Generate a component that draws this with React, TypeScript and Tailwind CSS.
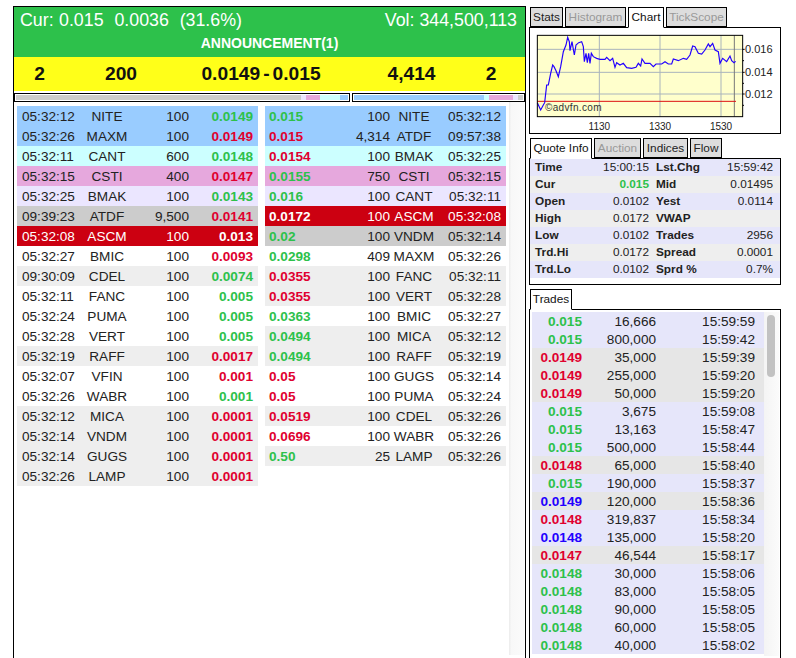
import React from 'react';

const ROW: Record<string, string> = {
  blue: 'bg-[#99ccff]',
  cyan: 'bg-[#ccffff]',
  pink: 'bg-[#e6a8dd]',
  lav: 'bg-[#ebe6ff]',
  grey: 'bg-[#cccccc]',
  red: 'bg-[#cc0011] text-white',
  white: 'bg-white',
  alt: 'bg-[#eeeeee]',
};

const PRICE: Record<string, string> = {
  g: 'text-[#2dc14b]',
  r: 'text-[#e0002f]',
  b: 'text-[#2200ff]',
  w: 'text-white',
};

const bids = [
  ['05:32:12', 'NITE', '100', '0.0149', 'g', 'blue'],
  ['05:32:26', 'MAXM', '100', '0.0149', 'r', 'blue'],
  ['05:32:11', 'CANT', '600', '0.0148', 'g', 'cyan'],
  ['05:32:15', 'CSTI', '400', '0.0147', 'r', 'pink'],
  ['05:32:25', 'BMAK', '100', '0.0143', 'g', 'lav'],
  ['09:39:23', 'ATDF', '9,500', '0.0141', 'r', 'grey'],
  ['05:32:08', 'ASCM', '100', '0.013', 'w', 'red'],
  ['05:32:27', 'BMIC', '100', '0.0093', 'r', 'white'],
  ['09:30:09', 'CDEL', '100', '0.0074', 'g', 'alt'],
  ['05:32:11', 'FANC', '100', '0.005', 'g', 'white'],
  ['05:32:24', 'PUMA', '100', '0.005', 'g', 'white'],
  ['05:32:28', 'VERT', '100', '0.005', 'g', 'white'],
  ['05:32:19', 'RAFF', '100', '0.0017', 'r', 'alt'],
  ['05:32:07', 'VFIN', '100', '0.001', 'r', 'white'],
  ['05:32:26', 'WABR', '100', '0.001', 'g', 'white'],
  ['05:32:12', 'MICA', '100', '0.0001', 'r', 'alt'],
  ['05:32:14', 'VNDM', '100', '0.0001', 'r', 'alt'],
  ['05:32:14', 'GUGS', '100', '0.0001', 'r', 'alt'],
  ['05:32:26', 'LAMP', '100', '0.0001', 'r', 'alt'],
];

const asks = [
  ['0.015', '100', 'NITE', '05:32:12', 'g', 'blue'],
  ['0.015', '4,314', 'ATDF', '09:57:38', 'r', 'blue'],
  ['0.0154', '100', 'BMAK', '05:32:25', 'r', 'cyan'],
  ['0.0155', '750', 'CSTI', '05:32:15', 'g', 'pink'],
  ['0.016', '100', 'CANT', '05:32:11', 'g', 'lav'],
  ['0.0172', '100', 'ASCM', '05:32:08', 'w', 'red'],
  ['0.02', '100', 'VNDM', '05:32:14', 'g', 'grey'],
  ['0.0298', '409', 'MAXM', '05:32:26', 'g', 'white'],
  ['0.0355', '100', 'FANC', '05:32:11', 'r', 'alt'],
  ['0.0355', '100', 'VERT', '05:32:28', 'r', 'alt'],
  ['0.0363', '100', 'BMIC', '05:32:27', 'g', 'white'],
  ['0.0494', '100', 'MICA', '05:32:12', 'g', 'alt'],
  ['0.0494', '100', 'RAFF', '05:32:19', 'g', 'alt'],
  ['0.05', '100', 'GUGS', '05:32:14', 'r', 'white'],
  ['0.05', '100', 'PUMA', '05:32:24', 'r', 'white'],
  ['0.0519', '100', 'CDEL', '05:32:26', 'r', 'alt'],
  ['0.0696', '100', 'WABR', '05:32:26', 'r', 'white'],
  ['0.50', '25', 'LAMP', '05:32:26', 'g', 'alt'],
];

const quote = [
  ['Time', '15:00:15', 'Lst.Chg', '15:59:42'],
  ['Cur', '0.015', 'Mid', '0.01495'],
  ['Open', '0.0102', 'Yest', '0.0114'],
  ['High', '0.0172', 'VWAP', ''],
  ['Low', '0.0102', 'Trades', '2956'],
  ['Trd.Hi', '0.0172', 'Spread', '0.0001'],
  ['Trd.Lo', '0.0102', 'Sprd %', '0.7%'],
];

const trades = [
  ['0.015', '16,666', '15:59:59', 'g', 0],
  ['0.015', '800,000', '15:59:42', 'g', 0],
  ['0.0149', '35,000', '15:59:39', 'r', 1],
  ['0.0149', '255,000', '15:59:20', 'r', 1],
  ['0.0149', '50,000', '15:59:20', 'r', 1],
  ['0.015', '3,675', '15:59:08', 'g', 0],
  ['0.015', '13,163', '15:58:47', 'g', 0],
  ['0.015', '500,000', '15:58:44', 'g', 0],
  ['0.0148', '65,000', '15:58:40', 'r', 1],
  ['0.015', '190,000', '15:58:37', 'g', 0],
  ['0.0149', '120,000', '15:58:36', 'b', 1],
  ['0.0148', '319,837', '15:58:34', 'r', 0],
  ['0.0148', '135,000', '15:58:20', 'b', 0],
  ['0.0147', '46,544', '15:58:17', 'r', 1],
  ['0.0148', '30,000', '15:58:06', 'g', 0],
  ['0.0148', '83,000', '15:58:05', 'g', 0],
  ['0.0148', '90,000', '15:58:05', 'g', 0],
  ['0.0148', '60,000', '15:58:05', 'g', 0],
  ['0.0148', '40,000', '15:58:02', 'g', 0],
];

const chartLine =
  '22,218 32,240 40,225 44,218 50,165 55,165 62,130 68,105 72,110 78,122 85,140 92,110 100,65 108,45 113,22 118,35 120,62 126,35 133,75 138,45 146,38 155,35 160,50 163,95 168,70 172,98 176,70 180,100 184,70 190,80 200,85 210,88 225,88 230,82 240,92 248,85 255,112 260,98 270,105 280,100 290,113 305,115 318,112 325,100 332,108 336,87 345,100 360,100 370,110 378,102 395,102 405,95 415,102 425,102 430,87 445,92 460,85 470,88 480,75 488,48 495,50 505,70 515,72 525,60 535,42 540,50 548,40 555,60 565,65 570,100 578,85 590,95 600,78 605,92 612,98 617,94';

function Tab({ label, w, state }: { label: string; w: string; state: 'on' | 'off' | 'dim' }) {
  return (
    <div
      className={`${w} border border-black text-center text-[11.8px] leading-[19px] whitespace-nowrap ${
        state === 'on'
          ? 'h-[21px] relative z-10 bg-white border-b-white text-[#111]'
          : state === 'off'
            ? 'h-[20px] bg-[#dddddd] text-[#222]'
            : 'h-[20px] bg-[#dddddd] text-[#999999]'
      }`}
    >
      {label}
    </div>
  );
}

function Chart() {
  return (
    <svg width="250" height="105" viewBox="0 0 750 315" className="block mt-[2px]">
      <rect x="22" y="16" width="616" height="244" fill="#ffffcc" />
      <g stroke="#a9b4bc" strokeWidth="3">
        <line x1="208" y1="16" x2="208" y2="260" />
        <line x1="390" y1="16" x2="390" y2="260" />
        <line x1="573" y1="16" x2="573" y2="260" />
        <line x1="22" y1="58" x2="638" y2="58" />
        <line x1="22" y1="127" x2="638" y2="127" />
        <line x1="22" y1="192" x2="638" y2="192" />
      </g>
      <line x1="613" y1="16" x2="613" y2="260" stroke="#777777" strokeWidth="3" />
      <line x1="22" y1="214" x2="618" y2="214" stroke="#dd1111" strokeWidth="3" />
      <polyline points={chartLine} fill="none" stroke="#2200ff" strokeWidth="3.5" />
      <text x="45" y="243" fontSize="30" fill="#333333" letterSpacing="1">©advfn.com</text>
      <rect x="22" y="16" width="616" height="244" fill="none" stroke="#000000" strokeWidth="3" />
      <g stroke="#000000" strokeWidth="3">
        <line x1="638" y1="58" x2="644" y2="58" />
        <line x1="638" y1="127" x2="644" y2="127" />
        <line x1="638" y1="192" x2="644" y2="192" />
        <line x1="638" y1="92" x2="642" y2="92" />
        <line x1="638" y1="160" x2="642" y2="160" />
        <line x1="638" y1="226" x2="642" y2="226" />
      </g>
      <g fontSize="33" fill="#222222">
        <text x="645" y="70">0.016</text>
        <text x="645" y="139">0.014</text>
        <text x="645" y="204">0.012</text>
      </g>
      <g fontSize="30" fill="#222222">
        <text x="208" y="300" textAnchor="middle">1130</text>
        <text x="390" y="300" textAnchor="middle">1330</text>
        <text x="573" y="300" textAnchor="middle">1530</text>
      </g>
    </svg>
  );
}

export default function App() {
  return (
    <div className="flex w-[796px] h-[658px] overflow-hidden bg-white pl-[13px] pt-[6px] font-['Liberation_Sans',Arial,sans-serif] text-[#222222]">
      {/* level 2 side */}
      <div className="w-[513px] h-[660px] shrink-0 border border-black">
        <div className="h-[50px] bg-[#2dc14b] text-white">
          <div className="flex justify-between h-[26px] pl-[6px] pr-[8px] text-[17.8px] leading-[27px] whitespace-pre">
            <span className="[word-spacing:0.5px]">Cur: 0.015  0.0036  (31.6%)</span>
            <span>Vol: 344,500,113</span>
          </div>
          <div className="text-center text-[14px] font-bold leading-[21px]">ANNOUNCEMENT(1)</div>
        </div>
        <div className="grid grid-cols-[51px_112px_168px_133px_26px] h-[34px] bg-[#ffff19] text-[#111] text-center text-[19.2px] font-bold leading-[34px]">
          <span>2</span>
          <span>200</span>
          <span>0.0149<span className="mx-[3px]">-</span>0.015</span>
          <span>4,414</span>
          <span>2</span>
        </div>
        <div className="flex gap-[2px] mt-[2px] h-[9px]">
          <div className="flex w-[336px] border border-black p-[1px] h-[9px]">
            <div className="w-[285px] bg-[#cccccc]" />
            <div className="w-[5px] bg-[#ebe6ff]" />
            <div className="w-[14px] bg-[#e6a8dd]" />
            <div className="w-[20px] bg-[#ccffff]" />
            <div className="w-[8px] bg-[#99ccff]" />
          </div>
          <div className="flex w-[173px] border border-black p-[1px] h-[9px]">
            <div className="w-[131px] bg-[#99ccff]" />
            <div className="w-[5px] bg-[#ccffff]" />
            <div className="w-[24px] bg-[#e6a8dd]" />
            <div className="w-[5px] bg-[#ebe6ff]" />
            <div className="w-[5px] bg-[#cccccc]" />
          </div>
        </div>
        <div className="flex h-[553px]">
          <div className="w-[495px] flex pl-[3px] pt-[4px] gap-[7px] text-[13.6px] leading-[21px]">
            <div className="w-[241px]">
              {bids.map((r, i) => (
                <div key={i} className={`grid grid-cols-[57px_56px_54px_64px] px-[5px] h-[20px] whitespace-nowrap ${ROW[r[5]]}`}>
                  <span>{r[0]}</span>
                  <span className="text-center">{r[1]}</span>
                  <span className="text-right">{r[2]}</span>
                  <span className={`text-right font-bold ${PRICE[r[4]]}`}>{r[3]}</span>
                </div>
              ))}
            </div>
            <div className="w-[241px]">
              {asks.map((r, i) => (
                <div key={i} className={`grid grid-cols-[70px_51px_48px_63px] pl-[4px] h-[20px] whitespace-nowrap ${ROW[r[5]]}`}>
                  <span className={`font-bold ${PRICE[r[4]]}`}>{r[0]}</span>
                  <span className="text-right">{r[1]}</span>
                  <span className="text-center">{r[2]}</span>
                  <span className="text-right">{r[3]}</span>
                </div>
              ))}
            </div>
          </div>
          <div className="w-[15px] h-[553px] bg-linear-to-r from-[#ebebeb] via-[#f8f8f8] via-[15%] to-[#fbfbfb]" />
        </div>
      </div>

      {/* right column */}
      <div className="w-[252px] ml-[3px] pt-[1px] shrink-0">
        <div className="flex gap-[2px] pl-[1px] h-[20px]">
          <Tab label="Stats" w="w-[33px]" state="off" />
          <Tab label="Histogram" w="w-[61px]" state="dim" />
          <Tab label="Chart" w="w-[36px]" state="on" />
          <Tab label="TickScope" w="w-[61px]" state="dim" />
        </div>
        <div className="h-[107px] border border-black">
          <Chart />
        </div>

        <div className="flex gap-[2px] pl-[1px] h-[20px] mt-[4px]">
          <Tab label="Quote Info" w="w-[62px]" state="on" />
          <Tab label="Auction" w="w-[47px]" state="dim" />
          <Tab label="Indices" w="w-[45px]" state="off" />
          <Tab label="Flow" w="w-[32px]" state="off" />
        </div>
        <div className="h-[127px] border border-black text-[11.8px] leading-[17px]">
          {quote.map((r, i) => (
            <div key={i} className={`grid grid-cols-[114px_7px_117px] pl-[5px] h-[17px] ${i % 2 ? 'bg-[#eeeeee]' : 'bg-[#e6e6fa]'}`}>
              <div className="flex justify-between">
                <b className="text-[#222]">{r[0]}</b>
                <span className={i === 1 ? 'font-bold text-[#2dc14b]' : ''}>{r[1]}</span>
              </div>
              <span />
              <div className="flex justify-between">
                <b className="text-[#222]">{r[2]}</b>
                <span>{r[3]}</span>
              </div>
            </div>
          ))}
        </div>

        <div className="flex pl-[1px] h-[20px] mt-[4px]">
          <Tab label="Trades" w="w-[42px]" state="on" />
        </div>
        <div className="flex h-[360px] border border-black pl-[2px] pt-[2px] text-[13.6px] leading-[19px]">
          <div className="w-[232px]">
            {trades.map((r, i) => (
              <div key={i} className={`grid grid-cols-[50px_74px_99px] h-[18px] text-right ${r[4] ? 'bg-[#e6e6e6]' : 'bg-[#e6e6fa]'}`}>
                <span className={`font-bold ${PRICE[r[3] as string]}`}>{r[0]}</span>
                <span>{r[1]}</span>
                <span>{r[2]}</span>
              </div>
            ))}
          </div>
          <div className="w-[15px] h-[344px] pl-[3px] pt-[3px] bg-linear-to-r from-[#f4f4f4] to-[#fbfbfb]">
            <div className="w-[8px] h-[62px] rounded-[4px] bg-[#c2c2c2]" />
          </div>
        </div>
      </div>
    </div>
  );
}
